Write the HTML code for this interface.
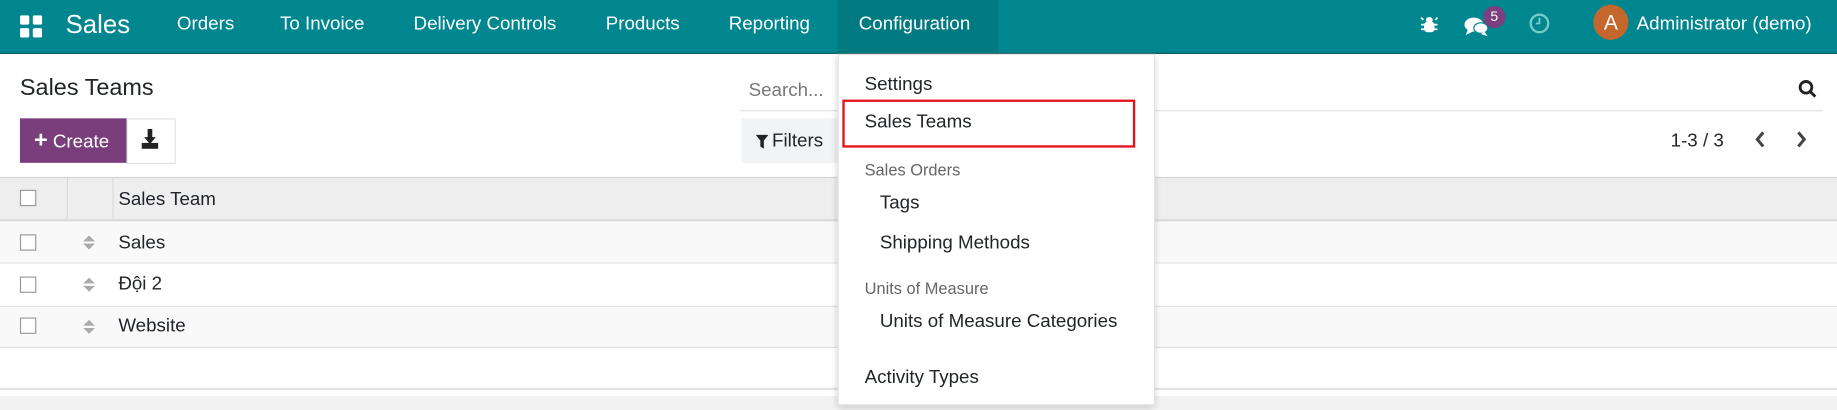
<!DOCTYPE html>
<html><head><meta charset="utf-8"><style>
html,body{margin:0;padding:0;width:1837px;height:410px;overflow:hidden;background:#fff}
#w{position:absolute;left:0;top:0;width:1568px;height:350px;transform:scale(1.17156);transform-origin:0 0;font-family:"Liberation Sans","Noto Sans CJK SC",sans-serif;color:#212529;font-size:16px}
.a{position:absolute;white-space:nowrap}
.nav{position:absolute;left:0;top:0;width:1568px;height:46px;background:#00868f;border-bottom:1px solid #0a5b60;box-sizing:border-box}
.nav .a{color:#fff;top:12px;font-size:16px}
.cb{position:absolute;width:14px;height:14px;border:1px solid #999;background:#fff;box-sizing:border-box}
.dd .a{font-size:16px;color:#212529}
.hd{font-size:14px!important;color:#666!important}
.sort{position:absolute;width:0;height:0;border-left:5px solid transparent;border-right:5px solid transparent}
</style></head><body><div id="w">
<div class="nav">
 <svg class="a" style="left:17px;top:13px" width="19" height="19" viewBox="0 0 19 19" fill="#fff"><rect x="0" y="0" width="8" height="8" rx="1.5"/><rect x="11" y="0" width="8" height="8" rx="1.5"/><rect x="0" y="11" width="8" height="8" rx="1.5"/><rect x="11" y="11" width="8" height="8" rx="1.5"/></svg>
 <div class="a" style="left:56px;top:8px;font-size:22px">Sales</div>
 <div class="a" style="left:151px">Orders</div>
 <div class="a" style="left:239px">To Invoice</div>
 <div class="a" style="left:353px">Delivery Controls</div>
 <div class="a" style="left:517px">Products</div>
 <div class="a" style="left:622px">Reporting</div>
 <div class="a" style="left:715px;top:0;width:137px;height:45px;background:#017a82"></div>
 <div class="a" style="left:733px">Configuration</div>
 <svg class="a" style="left:1212px;top:12px" width="16" height="18" viewBox="0 0 16 18" fill="#fff"><ellipse cx="8" cy="5" rx="3" ry="2.5"/><rect x="3.5" y="6.5" width="9" height="9" rx="3"/><path d="M1 9h14M1 13h14M3 5l-2-2M13 5l2-2" stroke="#fff" stroke-width="1.5"/></svg>
 <svg class="a" style="left:1250px;top:14px" width="22" height="18" viewBox="0 0 22 18" fill="#fff"><ellipse cx="8" cy="7" rx="8" ry="6"/><path d="M3 11l-2 5 6-3z"/><ellipse cx="14" cy="10" rx="6" ry="4.5" fill="#fff" stroke="#00868f" stroke-width="1"/><path d="M17 13l3 4-6-2z"/></svg>
 <div class="a" style="left:1266px;top:5px;width:19px;height:19px;border-radius:50%;background:#7c3f7f;font-size:12px;text-align:center;line-height:18px">5</div>
 <svg class="a" style="left:1305px;top:11px" width="18" height="18" viewBox="0 0 18 18" fill="none" stroke="#7ac7cc" stroke-width="2"><circle cx="9" cy="9" r="7.5"/><path d="M9 4v5H6" stroke-width="1.6"/></svg>
 <div class="a" style="left:1360px;top:4px;width:30px;height:30px;border-radius:50%;background:#c4672c;font-size:18px;text-align:center;line-height:30px">A</div>
 <div class="a" style="left:1397px">Administrator (demo)</div>
</div>
<div class="a" style="left:17px;top:64px;font-size:20px">Sales Teams</div>
<div class="a" style="left:639px;top:69px;color:#777">Search...</div>
<div class="a" style="left:632px;top:94px;width:924px;height:1px;background:#dee2e6"></div>
<svg class="a" style="left:1535px;top:68px" width="16" height="16" viewBox="0 0 16 16" fill="none" stroke="#222" stroke-width="2.4"><circle cx="6.5" cy="6.5" r="5"/><path d="M10 10l4.5 4.5"/></svg>
<div class="a" style="left:17px;top:101px;width:91px;height:38px;background:#7a3e7d;color:#fff;font-size:16px;line-height:38px"><span style="font-weight:bold;font-size:20px;margin-left:12px">+</span> Create</div>
<div class="a" style="left:108px;top:101px;width:40px;height:37px;border:1px solid #dee2e6;background:#fff"></div>
<svg class="a" style="left:120px;top:110px" width="16" height="18" viewBox="0 0 16 18" fill="#222"><path d="M6 0h4v7h3l-5 6-5-6h3z"/><rect x="1" y="12" width="14" height="5"/></svg>
<div class="a" style="left:633px;top:101px;width:82px;height:38px;background:#f2f3f4"></div>
<svg class="a" style="left:645px;top:115px" width="11" height="12" viewBox="0 0 11 12" fill="#222"><path d="M0 0h11L7 5v7L4 10V5z"/></svg>
<div class="a" style="left:659px;top:112px">Filters</div>
<div class="a" style="left:1426px;top:112px">1-3 / 3</div>
<svg class="a" style="left:1497px;top:111px" width="10" height="16" viewBox="0 0 10 16" fill="none" stroke="#444" stroke-width="2.6"><path d="M8 2L3 8l5 6"/></svg>
<svg class="a" style="left:1533px;top:111px" width="10" height="16" viewBox="0 0 10 16" fill="none" stroke="#444" stroke-width="2.6"><path d="M2 2l5 6-5 6"/></svg>
<div class="a" style="left:0;top:151px;width:1568px;height:38px;background:#eeeeef;border-top:1px solid #d6d6d6;border-bottom:2px solid #dcdcdc;box-sizing:border-box"></div>
<div class="a" style="left:57px;top:152px;width:1px;height:35px;background:#dadada"></div>
<div class="a" style="left:96px;top:152px;width:1px;height:35px;background:#dadada"></div>
<div class="cb" style="left:17px;top:162px"></div>
<div class="a" style="left:101px;top:162px;font-size:16px">Sales Team</div>
<div class="a" style="left:0;top:189px;width:1568px;height:35px;background:#f9f9f9;border-bottom:1px solid #dee2e6"></div>
<div class="a" style="left:0;top:225px;width:1568px;height:36px;background:#fff;border-bottom:1px solid #dee2e6"></div>
<div class="a" style="left:0;top:262px;width:1568px;height:34px;background:#f9f9f9;border-bottom:1px solid #dee2e6"></div>
<div class="cb" style="left:17px;top:200px"></div><div class="cb" style="left:17px;top:236px"></div><div class="cb" style="left:17px;top:271px"></div>
<div class="sort" style="left:71px;top:201px;border-bottom:5px solid #aaa"></div><div class="sort" style="left:71px;top:208px;border-top:5px solid #aaa"></div>
<div class="sort" style="left:71px;top:237px;border-bottom:5px solid #aaa"></div><div class="sort" style="left:71px;top:244px;border-top:5px solid #aaa"></div>
<div class="sort" style="left:71px;top:273px;border-bottom:5px solid #aaa"></div><div class="sort" style="left:71px;top:280px;border-top:5px solid #aaa"></div>
<div class="a" style="left:101px;top:199px">Sales</div>
<div class="a" style="left:101px;top:234px">Đội 2</div>
<div class="a" style="left:101px;top:270px">Website</div>
<div class="a" style="left:0;top:331px;width:1568px;height:2px;background:#e3e3e3"></div>
<div class="a" style="left:0;top:338px;width:1568px;height:12px;background:#f2f2f2"></div>
<div class="dd a" style="left:715px;top:46px;width:271px;height:300px;background:#fff;box-shadow:0 2px 6px rgba(0,0,0,.2);border:1px solid #e3e3e3;box-sizing:border-box">
 <div class="a" style="left:22px;top:17px">Settings</div>
 <div class="a" style="left:3px;top:38px;width:246px;height:37px;border:2px solid #e3141b"></div>
 <div class="a" style="left:22px;top:49px">Sales Teams</div>
 <div class="a hd" style="left:22px;top:90px">Sales Orders</div>
 <div class="a" style="left:35px;top:118px">Tags</div>
 <div class="a" style="left:35px;top:152px">Shipping Methods</div>
 <div class="a hd" style="left:22px;top:191px">Units of Measure</div>
 <div class="a" style="left:35px;top:219px">Units of Measure Categories</div>
 <div class="a" style="left:22px;top:267px">Activity Types</div>
</div>
</div></body></html>
